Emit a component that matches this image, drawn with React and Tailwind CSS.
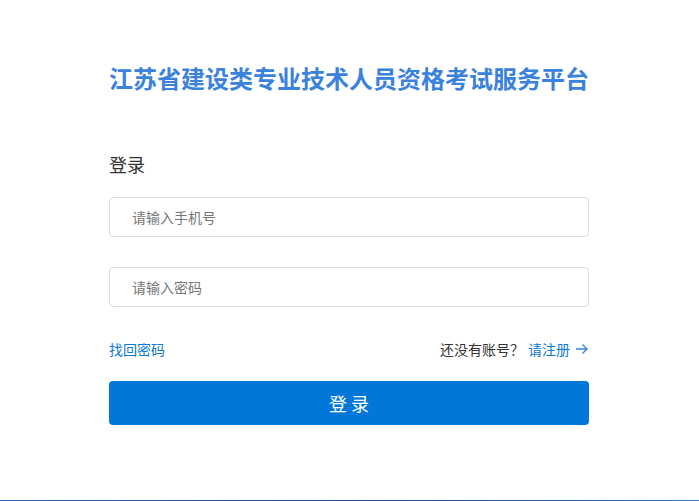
export default function App() {
  return (
    <div className="w-[699px] h-[501px] bg-white flex flex-col" style={{ fontFamily: '"Noto Sans CJK SC", "Noto Sans", sans-serif' }}>
      <div className="flex-1">
        <div className="w-[480px] ml-[109px]">
          <h1 className="pt-[60px] text-[24px] leading-[36px] font-bold text-[#3a82dc] text-center whitespace-nowrap">
            江苏省建设类专业技术人员资格考试服务平台
          </h1>
          <div className="mt-[55px] text-[18px] leading-[26px] text-[#333]">登录</div>
          <div className="mt-[20px] h-[40px] border border-[#dcdfe6] rounded-[4px] flex items-center pl-[22px] text-[14px] text-[#777]">
            请输入手机号
          </div>
          <div className="mt-[30px] h-[40px] border border-[#dcdfe6] rounded-[4px] flex items-center pl-[22px] text-[14px] text-[#777]">
            请输入密码
          </div>
          <div className="mt-[32px] flex justify-between items-center text-[14px] leading-[20px]">
            <span className="text-[#0d79d8]">找回密码</span>
            <span className="flex items-center">
              <span className="text-[#333]">还没有账号？</span>
              <span className="text-[#0d79d8] ml-[4px]">请注册</span>
              <svg className="ml-[5px]" width="14" height="14" viewBox="0 0 14 14" fill="none" stroke="#3a82dc" strokeWidth="1.4">
                <path d="M1 7h11.5M7.5 2.5L12 7l-4.5 4.5" />
              </svg>
            </span>
          </div>
          <div className="mt-[22px] h-[44px] bg-[#0077d9] rounded-[4px] flex items-center justify-center text-white text-[18px]">
            登 录
          </div>
        </div>
      </div>
      <div className="h-[1px] bg-gradient-to-r from-[#2e6cc8] via-[#1d4f9e] to-[#2a7cc6]" />
    </div>
  );
}
